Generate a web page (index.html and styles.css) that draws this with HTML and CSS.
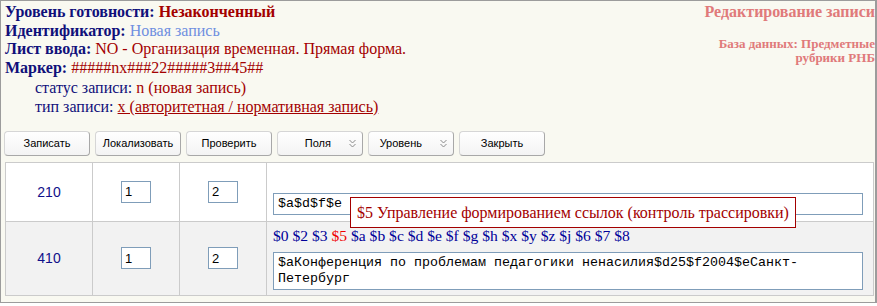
FILE: index.html
```html
<!DOCTYPE html>
<html lang="ru">

<head>
    <meta charset="UTF-8">
    <title>Редактирование записи</title>
    <link rel="stylesheet" href="styles.css">
</head>

<body>
    <div class="frame">
        <div class="header">
            <div class="info">
                <div class="line"><b>Уровень готовности:</b> <b class="red">Незаконченный</b></div>
                <div class="line"><b>Идентификатор:</b> <span class="blue">Новая запись</span></div>
                <div class="line"><b>Лист ввода:</b> <span class="red">NO - Организация временная. Прямая форма.</span></div>
                <div class="line"><b>Маркер:</b> <span class="red">#####nx###22#####3##45##</span></div>
                <div class="sub">статус записи: <span class="red">n (новая запись)</span></div>
                <div class="sub">тип записи: <span class="red link">x (авторитетная / нормативная запись)</span></div>
            </div>
            <div class="side">
                <div class="side-title">Редактирование записи</div>
                <div class="side-db">База данных: Предметные<br>рубрики РНБ</div>
            </div>
        </div>

        <div class="toolbar">
            <button class="btn">Записать</button>
            <button class="btn">Локализовать</button>
            <button class="btn">Проверить</button>
            <button class="btn btn-menu">Поля
                <svg class="chev" width="7" height="9" viewBox="0 0 7 9"><path d="M0.5 1 L3.5 4 L6.5 1 M0.5 5 L3.5 8 L6.5 5" fill="none" stroke="#8a8a8a" stroke-width="1"/></svg>
            </button>
            <button class="btn btn-menu">Уровень
                <svg class="chev" width="7" height="9" viewBox="0 0 7 9"><path d="M0.5 1 L3.5 4 L6.5 1 M0.5 5 L3.5 8 L6.5 5" fill="none" stroke="#8a8a8a" stroke-width="1"/></svg>
            </button>
            <button class="btn">Закрыть</button>
        </div>

        <table class="fields">
            <tr class="row-white">
                <td class="tag">210</td>
                <td class="ind"><input class="ind-input" type="text" value="1"></td>
                <td class="ind"><input class="ind-input" type="text" value="2"></td>
                <td class="data">
                    <div class="subs"></div>
                    <input class="data-input" type="text" value="$a$d$f$e">
                    <div class="tip">$5 Управление формированием ссылок (контроль трассировки)</div>
                </td>
            </tr>
            <tr class="row-gray">
                <td class="tag">410</td>
                <td class="ind"><input class="ind-input" type="text" value="1"></td>
                <td class="ind"><input class="ind-input" type="text" value="2"></td>
                <td class="data">
                    <div class="subs">$0 $2 $3 <span class="hot">$5</span> $a $b $c $d $e $f $g $h $x $y $z $j $6 $7 $8</div>
                    <textarea class="data-area">$aКонференция по проблемам педагогики ненасилия$d25$f2004$eСанкт-Петербург</textarea>
                </td>
            </tr>
        </table>
    </div>
</body>

</html>
```

FILE: styles.css
```css
body {
    margin: 0;
    background: #fff;
}

.frame {
    box-sizing: border-box;
    width: 877px;
    height: 303px;
    border: 1px solid #9c9c9c;
    border-right-width: 2px;
    background: #f9f9f1;
    overflow: hidden;
    font-family: 'Liberation Serif', serif;
}

.header {
    display: flex;
    padding: 2px 0 0 4px;
}

.info {
    flex: 1;
    color: #10107a;
}

.line {
    font-size: 16px;
    line-height: 18.7px;
}

.sub {
    font-size: 16px;
    line-height: 19px;
    padding-left: 30px;
}

.red {
    color: #a30000;
}

.line .red {
    font-weight: normal;
}

.line b.red {
    font-weight: bold;
}

.blue {
    color: #6f8fe0;
}

.link {
    text-decoration: underline;
}

.side {
    text-align: right;
    color: #e07a7a;
    font-weight: bold;
    white-space: nowrap;
}

.side-title {
    font-size: 16px;
    line-height: 18px;
}

.side-db {
    font-size: 13px;
    line-height: 14px;
    margin-top: 16px;
}

.toolbar {
    display: flex;
    gap: 5px;
    padding: 15px 0 0 3px;
}

.btn {
    box-sizing: border-box;
    width: 86px;
    height: 25px;
    border: 1px solid #d6d6d6;
    border-right-color: #a8a8a8;
    border-bottom-color: #a8a8a8;
    border-radius: 4px;
    background: linear-gradient(#ffffff, #f3f3f3);
    font-family: 'Liberation Sans', sans-serif;
    font-size: 11px;
    color: #000;
    padding: 0;
}

.btn-menu {
    display: flex;
    align-items: center;
    justify-content: flex-end;
    gap: 18px;
    padding-right: 6px;
}

.chev {
    display: block;
}

.fields {
    border-collapse: collapse;
    margin: 6px 0 0 4px;
    width: 869px;
}

.fields td {
    border: 1px solid #cbcbcb;
    padding: 0;
}

.row-white {
    background: #fff;
    height: 59px;
}

.row-gray {
    background: #f2f2f2;
    height: 73px;
}

.tag {
    width: 86px;
    text-align: center;
    color: #10108a;
    font-family: 'Liberation Sans', sans-serif;
    font-size: 14px;
}

.ind {
    width: 86px;
    text-align: center;
}

.ind-input {
    box-sizing: border-box;
    width: 30px;
    height: 22px;
    border: 1px solid #7f9db9;
    padding: 0 3px;
    font-family: 'Liberation Sans', sans-serif;
    font-size: 13px;
}

.data {
    position: relative;
    padding: 4px 10px 5px 6px !important;
    vertical-align: top;
}

.subs {
    height: 20px;
    margin-bottom: 6px;
    font-size: 15.6px;
    line-height: 20px;
    color: #000099;
}

.hot {
    color: #f00000;
}

.data-input,
.data-area {
    box-sizing: border-box;
    display: block;
    width: 590px;
    border: 1px solid #7f9db9;
    background: #fff;
    font-family: 'Liberation Mono', monospace;
    font-size: 13.33px;
    color: #000;
    padding: 2px 4px;
    margin: 0;
}

.data-input {
    height: 22px;
}

.data-area {
    height: 38px;
    resize: none;
    overflow: hidden;
    line-height: 16px;
}

.tip {
    position: absolute;
    left: 83px;
    top: 34px;
    box-sizing: border-box;
    width: 446px;
    height: 31px;
    border: 1px solid #a30000;
    background: #fff;
    color: #a30000;
    font-size: 16px;
    line-height: 29px;
    padding-left: 6px;
    white-space: nowrap;
    z-index: 2;
}
```
